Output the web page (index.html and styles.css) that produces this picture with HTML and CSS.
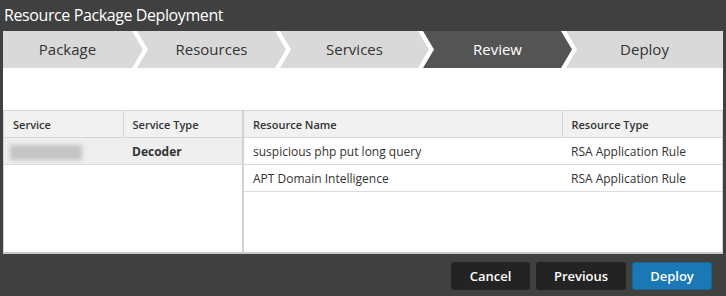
FILE: index.html
```html
<!DOCTYPE html>
<html>

<head>
  <meta charset="utf-8">
  <title>Resource Package Deployment</title>
  <link rel="stylesheet" href="styles.css">
</head>

<body>
  <div class="dialog">
    <div class="dialog-title">Resource Package Deployment</div>

    <div class="panel">
      <div class="steps">
        <div class="step first">Package</div>
        <div class="step">Resources</div>
        <div class="step">Services</div>
        <div class="step active">Review</div>
        <div class="step last">Deploy</div>
      </div>

      <div class="spacer"></div>

      <div class="grids">
        <div class="pane services">
          <table class="grid">
            <colgroup>
              <col style="width: 119px">
              <col>
            </colgroup>
            <tr class="head">
              <th>Service</th>
              <th>Service Type</th>
            </tr>
            <tr class="picked">
              <td><span class="blurred"></span></td>
              <td class="strong">Decoder</td>
            </tr>
          </table>
        </div>

        <div class="pane resources">
          <table class="grid">
            <colgroup>
              <col style="width: 318px">
              <col>
            </colgroup>
            <tr class="head">
              <th>Resource Name</th>
              <th>Resource Type</th>
            </tr>
            <tr>
              <td>suspicious php put long query</td>
              <td>RSA Application Rule</td>
            </tr>
            <tr>
              <td>APT Domain Intelligence</td>
              <td>RSA Application Rule</td>
            </tr>
          </table>
        </div>
      </div>
    </div>

    <div class="footer">
      <button class="btn">Cancel</button>
      <button class="btn wide">Previous</button>
      <button class="btn primary">Deploy</button>
    </div>
  </div>
</body>

</html>
```

FILE: styles.css
```css
body {
  margin: 0px;
  padding: 0px;
  background-color: #404040;
  font-family: "Open Sans", "Liberation Sans", sans-serif;
  overflow: hidden;
}

.dialog-title {
  height: 31px;
  line-height: 30px;
  padding-left: 4px;
  color: #ffffff;
  font-size: 16px;
  letter-spacing: -0.4px;
}

.panel {
  margin: 0px 3px;
  background-color: white;
}

/* wizard steps */
.steps {
  display: flex;
  height: 37px;
  background-color: white;
}

.step {
  flex: 0 0 149px;
  box-sizing: border-box;
  margin-left: -6px;
  padding: 0px 11px;
  background-color: #d9d9d9;
  color: #333333;
  font-size: 15px;
  line-height: 37px;
  text-align: center;
  clip-path: polygon(0 0, calc(100% - 11px) 0, 100% 50%, calc(100% - 11px) 100%, 0 100%, 11px 50%);
}

.step.first {
  flex-basis: 140px;
  margin-left: 0px;
  padding-left: 0px;
  clip-path: polygon(0 0, calc(100% - 11px) 0, 100% 50%, calc(100% - 11px) 100%, 0 100%);
}

.step.last {
  flex: 1;
  clip-path: polygon(0 0, 100% 0, 100% 100%, 0 100%, 11px 50%);
}

.step.active {
  background-color: #545454;
  color: white;
}

.spacer {
  height: 42px;
}

/* tables */
.grids {
  display: flex;
  height: 142px;
  border-bottom: 2px solid #c9c9c9;
}

.pane.services {
  width: 238px;
  border-left: 1px solid #d2d2d2;
  border-right: 2px solid #d2d2d2;
}

.pane.resources {
  flex: 1;
  border-right: 1px solid #d2d2d2;
}

.grid {
  width: 100%;
  border-collapse: collapse;
  table-layout: fixed;
  font-size: 12px;
  color: #333333;
}

.grid tr {
  height: 27px;
}

.grid th {
  height: 26px;
  padding: 0px 0px 0px 9px;
  text-align: left;
  font-size: 11px;
  font-weight: 600;
  background-color: #f1f1f1;
  border-top: 1px solid #d6d6d6;
  border-bottom: 1px solid #d6d6d6;
  border-right: 1px solid #d6d6d6;
}

.grid th:last-child {
  border-right: none;
}

.grid td {
  height: 26px;
  padding: 0px 0px 0px 9px;
  border-bottom: 1px solid #dcdcdc;
  white-space: nowrap;
}

.grid .picked td {
  background-color: #eeeeee;
}

.grid .strong {
  font-weight: bold;
}

.blurred {
  display: inline-block;
  width: 72px;
  height: 15px;
  margin-left: -3px;
  vertical-align: middle;
  background-color: #c4c4c4;
  filter: blur(2px);
}

/* footer buttons */
.footer {
  display: flex;
  justify-content: flex-end;
  gap: 6px;
  padding: 8px 14px 0px 0px;
}

.btn {
  width: 79px;
  height: 28px;
  border: none;
  border-radius: 3px;
  background-color: #232323;
  color: white;
  font-family: "Open Sans", "Liberation Sans", sans-serif;
  font-size: 13px;
  font-weight: 600;
}

.btn.wide {
  width: 90px;
}

.btn.primary {
  width: 80px;
  background-color: #1a78b4;
  border: 1px solid #15669c;
}
```
